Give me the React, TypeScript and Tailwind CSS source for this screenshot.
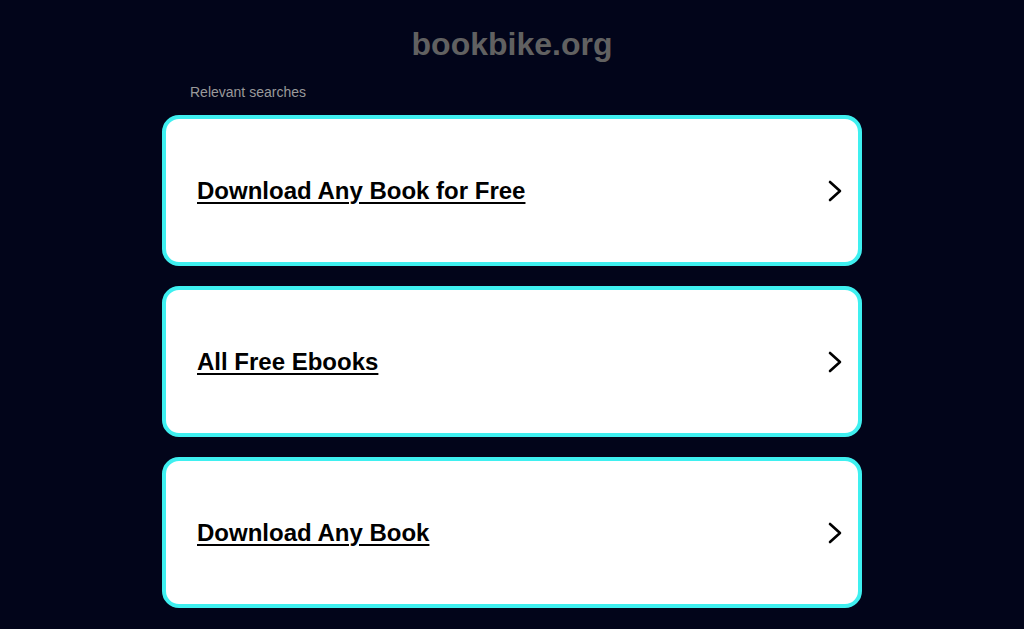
const searches = ["Download Any Book for Free", "All Free Ebooks", "Download Any Book"];

const Chevron = () => (
  <svg width="14" height="22" viewBox="0 0 14 22" fill="none" className="text-black">
    <polyline
      points="2,2 12,11 2,20"
      stroke="currentColor"
      strokeWidth="2.6"
      strokeLinecap="round"
      strokeLinejoin="round"
    />
  </svg>
);

export default function App() {
  return (
    <div className="min-h-[629px] w-full bg-[#02051a] font-['Liberation_Sans',Arial,sans-serif]">
      <div className="mx-auto w-[700px] pt-[26px]">
        {/* 見出し */}
        <h1 className="text-center text-[32px] font-bold leading-[36px] text-[#616161]">
          bookbike.org
        </h1>

        <div className="mt-[21px] pl-[28px] text-[14px] leading-[18px] text-[#9a9a9a]">
          Relevant searches
        </div>

        {/* 検索リンク */}
        <div className="mt-[14px] flex flex-col gap-[20px]">
          {searches.map((s, i) => (
            <a
              key={i}
              href="#"
              className="flex h-[151px] items-center justify-between rounded-[17px] border-4 border-[#3ff0f0] bg-white pl-[31px] pr-[16px]"
            >
              <span className="text-[24px] font-bold leading-[28px] text-black underline decoration-2 underline-offset-[3px]">
                {s}
              </span>
              <Chevron />
            </a>
          ))}
        </div>
      </div>
    </div>
  );
}
